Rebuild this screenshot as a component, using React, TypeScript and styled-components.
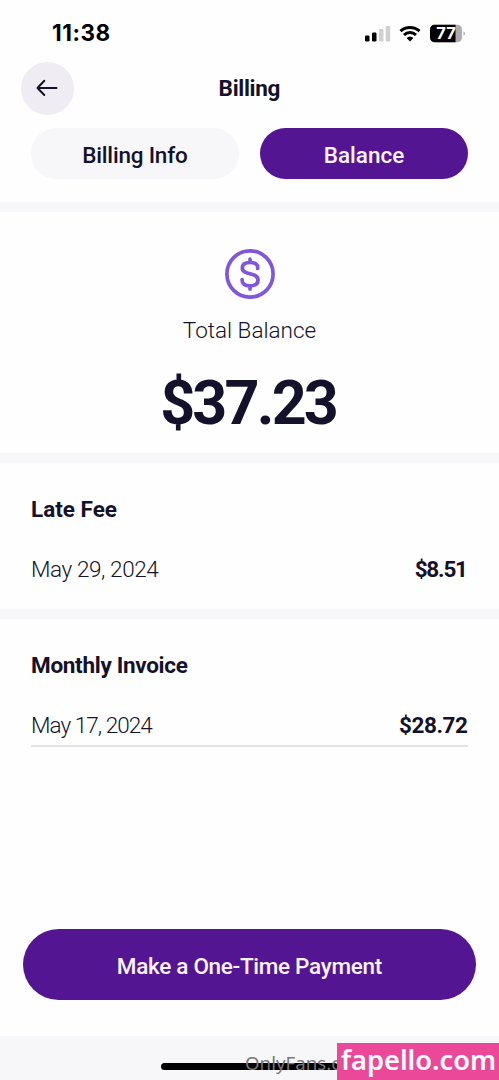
import React from 'react';
import styled, { createGlobalStyle } from 'styled-components';

const GlobalStyle = createGlobalStyle`
  * { box-sizing: border-box; }
  body { margin: 0; background: #fefefe; }
`;

const Screen = styled.main`
  position: relative;
  display: flex;
  flex-direction: column;
  width: 499px;
  height: 1080px;
  overflow: hidden;
  background: #fefefe;
  color: #14122a;
  font-family: Roboto, "Liberation Sans", sans-serif;
`;

const Label = styled.span<{ $weight?: number; $spacing?: number }>`
  margin-right: ${p => -(p.$spacing ?? 0)}px;
  font-size: 22.5px;
  font-weight: ${p => p.$weight ?? 400};
  letter-spacing: ${p => p.$spacing ?? 0}px;
  line-height: 28px;
  white-space: nowrap;
`;

const StatusBar = styled.div`
  display: flex;
  justify-content: space-between;
  align-items: center;
  height: 62px;
  padding: 5px 34px 0 52px;
`;

const Clock = styled.span`
  padding-bottom: 1px;
  font: 700 22.5px/28px Inter, sans-serif;
  letter-spacing: 0.5px;
  color: #000;
`;

const Header = styled.header`
  display: grid;
  grid-template-columns: 52px 1fr 52px;
  align-items: center;
  justify-items: center;
  height: 53px;
  padding: 0 21px;
`;

const Title = styled.h1`
  display: flex;
  margin: 0;
  padding-bottom: 2px;
`;

const BackButton = styled.button`
  display: flex;
  align-items: center;
  justify-content: center;
  width: 53px;
  height: 53px;
  padding: 0 0 1px;
  border: 0;
  border-radius: 50%;
  background: #efecf4;
`;

const Tabs = styled.nav`
  display: grid;
  grid-template-columns: 1fr 1fr;
  gap: 21px;
  height: 87px;
  padding: 13px 31px 23px 31px;
`;

const Tab = styled.button<{ $active?: boolean }>`
  padding: 3px 0 0;
  border: 0;
  border-radius: 26px;
  font-family: inherit;
  color: ${p => (p.$active ? '#fbf3ff' : '#14122a')};
  background: ${p => (p.$active ? '#541592' : '#f7f7fa')};
`;

const Divider = styled.div`
  flex: none;
  height: 10px;
  background: #f7f7fa;
`;

const Summary = styled.section`
  display: flex;
  flex-direction: column;
  align-items: center;
  height: 241px;
  padding-top: 37px;
`;

const SummaryLabel = styled(Label)`
  margin-top: 17px;
`;

const Amount = styled.strong`
  margin-top: 23px;
  margin-right: 2.8px;
  font-size: 61px;
  font-weight: 700;
  letter-spacing: -2.8px;
  line-height: 72px;
`;

const Charge = styled.section<{ $height: number }>`
  height: ${p => p.$height}px;
  padding: 32px 31px 0;
`;

const ChargeTitle = styled.h2`
  display: flex;
  margin: 0;
`;

const ChargeRow = styled.div<{ $lined?: boolean }>`
  display: flex;
  justify-content: space-between;
  height: 41px;
  margin-top: 27px;
  padding-top: 5px;
  border-bottom: ${p => (p.$lined ? '2px solid #e3e3e5' : '0')};
`;

const Action = styled.div`
  display: flex;
  margin-top: auto;
  padding: 0 23px 36px;
`;

const PayButton = styled.button`
  flex: 1;
  height: 71px;
  padding: 3px 0 0;
  border: 0;
  border-radius: 36px;
  background: #541592;
  color: #fbf3ff;
  font-family: inherit;
`;

const Footer = styled.footer`
  display: flex;
  justify-content: center;
  height: 44px;
  padding-top: 27px;
  background: #f7f7fa;
`;

const HomeIndicator = styled.div`
  width: 177px;
  height: 7px;
  border-radius: 4px;
  background: #000;
`;

const Handle = styled.span`
  position: absolute;
  left: 245px;
  bottom: 4px;
  font: 400 18.7px/26px "Noto Sans", sans-serif;
  color: #77777a;
`;

const SiteBadge = styled.span`
  position: absolute;
  right: 0;
  bottom: 0;
  width: 162px;
  height: 37px;
  padding-left: 4px;
  background: #ec4899;
  color: #fff;
  font: 600 27.2px/33px "Noto Sans", sans-serif;
`;

const StatusIcons = () => (
  <svg width="100" height="24" viewBox="365 21.5 100 24">
    <rect x="365" y="35" width="4.5" height="6" rx="1.3" fill="#000" />
    <rect x="372" y="32" width="4.5" height="9" rx="1.3" fill="#000" />
    <rect x="379" y="28.5" width="4.5" height="12.5" rx="1.3" fill="#d0d0d0" />
    <rect x="385.7" y="25.5" width="4.5" height="15.5" rx="1.3" fill="#d0d0d0" />
    <g fill="none" stroke="#000" strokeWidth="3">
      <path d="M400.500 30.700a14 14 0 0 1 19 0" />
      <path d="M404 34.500a8.700 8.700 0 0 1 12 0" />
    </g>
    <path d="M406.600 37.500a5 5 0 0 1 6.800 0L410 41z" fill="#000" />
    <clipPath id="battery"><rect x="430" y="24" width="32" height="18" rx="5" /></clipPath>
    <g clipPath="url(#battery)">
      <rect x="430" y="24" width="32" height="18" fill="#adadad" />
      <rect x="430" y="24" width="25.5" height="18" fill="#000" />
    </g>
    <path d="M463.500 30.500q3 2.500 0 5z" fill="#adadad" />
    <text x="446" y="38.900" textAnchor="middle" fill="#fff" fontFamily="Inter" fontWeight="700" fontSize="16.5">77</text>
  </svg>
);

const ArrowIcon = () => (
  <svg width="22" height="18" viewBox="0 0 22 18" fill="none" stroke="#14122a" strokeWidth="2" strokeLinecap="round" strokeLinejoin="round">
    <path d="M20.500 9H1.500M8.300 1.700 1.500 9l6.800 7" />
  </svg>
);

const DollarIcon = () => (
  <svg width="50" height="50" viewBox="0 0 50 50" fill="none" stroke="#8057dc" strokeWidth="3.7" strokeLinecap="round">
    <circle cx="25" cy="25" r="23.1" />
    <path d="M32.700 19.500v-.7c0-3.500-2.500-5.300-7.700-5.300s-7.700 2-7.700 5.500c0 8 15.700 3.500 15.700 12 0 3.800-2.700 5.800-7.900 5.800s-8-2-8-5.800v-.5M25 10.200v2.500M25 37.700v2.400" />
  </svg>
);

export default function App() {
  return (
    <Screen>
      <GlobalStyle />
      <StatusBar><Clock>11:38</Clock><StatusIcons /></StatusBar>
      <Header>
        <BackButton aria-label="Back"><ArrowIcon /></BackButton>
        <Title><Label $weight={700} $spacing={-0.3}>Billing</Label></Title>
      </Header>
      <Tabs>
        <Tab><Label $weight={500} $spacing={-0.2}>Billing Info</Label></Tab>
        <Tab $active><Label $weight={500}>Balance</Label></Tab>
      </Tabs>
      <Divider />
      <Summary>
        <DollarIcon />
        <SummaryLabel $weight={300}>Total Balance</SummaryLabel>
        <Amount>$37.23</Amount>
      </Summary>
      <Divider />
      <Charge $height={146}>
        <ChargeTitle><Label $weight={700}>Late Fee</Label></ChargeTitle>
        <ChargeRow>
          <Label $weight={300} $spacing={-0.4}>May 29, 2024</Label>
          <Label $weight={700} $spacing={-1.2}>$8.51</Label>
        </ChargeRow>
      </Charge>
      <Divider />
      <Charge $height={150}>
        <ChargeTitle><Label $weight={700} $spacing={-0.3}>Monthly Invoice</Label></ChargeTitle>
        <ChargeRow $lined>
          <Label $weight={300} $spacing={-0.95}>May 17, 2024</Label>
          <Label $weight={700} $spacing={-0.4}>$28.72</Label>
        </ChargeRow>
      </Charge>
      <Action><PayButton><Label $weight={500} $spacing={-0.3}>Make a One-Time Payment</Label></PayButton></Action>
      <Footer><HomeIndicator /></Footer>
      <Handle>OnlyFans.com</Handle>
      <SiteBadge>fapello.com</SiteBadge>
    </Screen>
  );
}
